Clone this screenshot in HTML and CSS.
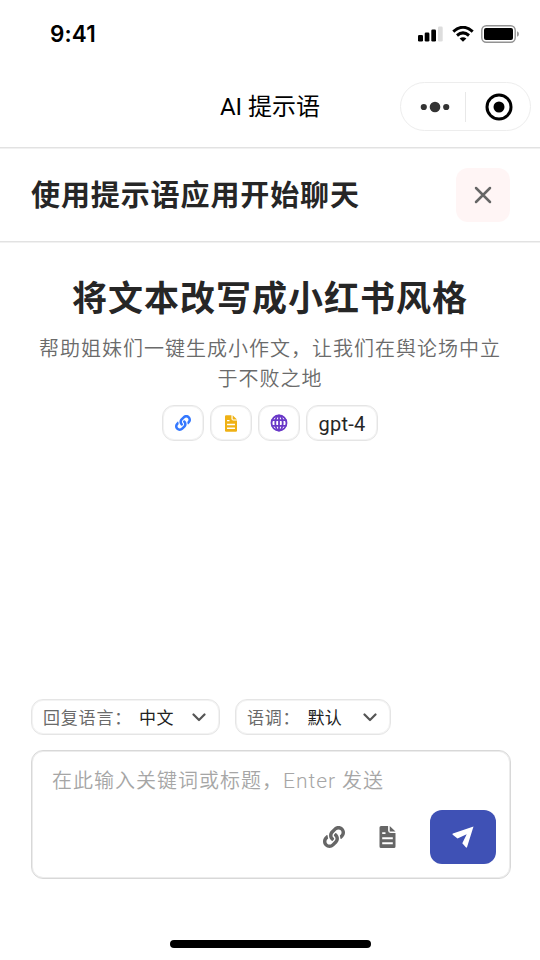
FILE: index.html
```html
<!DOCTYPE html>
<html lang="zh-CN">
<head>
<meta charset="utf-8">
<title>AI 提示语</title>
<link rel="stylesheet" href="styles.css">
</head>
<body>
<svg class="defs" aria-hidden="true">
  <symbol id="link" viewBox="0 0 512 512"><path d="M326.612 185.391c59.747 59.809 58.927 155.698.36 214.59-.11.12-.24.25-.36.37l-67.2 67.2c-59.27 59.27-155.699 59.262-214.96 0-59.27-59.26-59.27-155.7 0-214.96l37.106-37.106c9.84-9.84 26.786-3.3 27.294 10.606.648 17.722 3.826 35.527 9.69 52.721 1.986 5.822.567 12.262-3.783 16.612l-13.087 13.087c-28.026 28.026-28.905 73.66-1.155 101.96 28.024 28.579 74.086 28.749 102.325.51l67.2-67.19c28.191-28.191 28.073-73.757 0-101.83-3.701-3.694-7.429-6.564-10.341-8.569a16.037 16.037 0 0 1-6.947-12.606c-.396-10.567 3.348-21.456 11.698-29.806l21.054-21.055c5.521-5.521 14.182-6.199 20.584-1.731a152.482 152.482 0 0 1 20.522 17.197zM467.547 44.449c-59.261-59.262-155.69-59.27-214.96 0l-67.2 67.2c-.12.12-.25.25-.36.37-58.566 58.892-59.387 154.781.36 214.59a152.454 152.454 0 0 0 20.521 17.196c6.402 4.468 15.064 3.789 20.584-1.731l21.054-21.055c8.35-8.35 12.094-19.239 11.698-29.806a16.037 16.037 0 0 0-6.947-12.606c-2.912-2.005-6.64-4.875-10.341-8.569-28.073-28.073-28.191-73.639 0-101.83l67.2-67.19c28.239-28.239 74.3-28.069 102.325.51 27.75 28.3 26.872 73.934-1.155 101.96l-13.087 13.087c-4.35 4.35-5.769 10.79-3.783 16.612 5.864 17.194 9.042 34.999 9.69 52.721.509 13.906 17.454 20.446 27.294 10.606l37.106-37.106c59.271-59.259 59.271-155.699.001-214.959z"/></symbol>
  <symbol id="file" viewBox="0 0 16 22"><path fill-rule="evenodd" d="M1.5 0H8.6V4.600Q8.600 7 11 7H16V20.500Q16 22 14.500 22H1.500Q0 22 0 20.500V1.500Q0 0 1.500 0ZM2.700 6.300V8H6V6.300ZM2.700 11.300V13.200H13.300V11.300ZM2.700 16.300V18.200H13.300V16.300ZM10.200 0L16 5.500H10.200Z"/></symbol>
</svg>
<div class="screen">
  <div class="status">
    <span class="time">9:41</span>
    <svg class="signal" viewBox="0 0 26 16"><rect x="0" y="9" width="5" height="6.500" rx="1.300"/><rect x="6.700" y="6.500" width="4.700" height="9" rx="1.300"/><rect x="13.300" y="3.500" width="4.700" height="12" rx="1.300"/><rect class="faint" x="20" y=".5" width="4.700" height="15" rx="1.300"/></svg>
    <svg class="wifi" viewBox="0 0 22 16"><path class="arc" d="M1.300 5.600Q11-3 20.700 5.600M5 9.500Q11 4.300 17 9.500"/><path d="M7.600 12.400Q11 9.900 14.400 12.400L11 15.800Z"/></svg>
    <svg class="battery" viewBox="0 0 38 18"><rect class="shell" x=".8" y=".8" width="33.400" height="16.400" rx="4.500"/><rect x="3" y="3" width="29" height="12" rx="2"/><path class="tip" d="M36 6.300Q38 7 38 9T36 11.700Z"/></svg>
  </div>
  <header class="nav">
    <span class="nav-title">AI 提示语</span>
    <div class="capsule">
      <svg class="dots" viewBox="0 0 30 12"><circle cx="3.800" cy="6" r="3.100"/><circle cx="15" cy="6" r="5.300"/><circle cx="26.200" cy="6" r="3.100"/></svg>
      <i class="divider"></i>
      <svg class="target" viewBox="0 0 28 28"><circle class="ring" cx="14" cy="14" r="12"/><circle cx="14" cy="14" r="5.500"/></svg>
    </div>
  </header>
  <div class="bar">
    <h2>使用提示语应用开始聊天</h2>
    <button class="close" aria-label="关闭"><svg viewBox="0 0 18 18"><path d="M2 2L16 16M16 2L2 16"/></svg></button>
  </div>
  <main>
    <h1>将文本改写成小红书风格</h1>
    <p class="desc">帮助姐妹们一键生成小作文，让我们在舆论场中立于不败之地</p>
    <div class="tags">
      <span class="tag blue"><svg class="i-link"><use href="#link"/></svg></span>
      <span class="tag yellow"><svg class="i-file"><use href="#file"/></svg></span>
      <span class="tag purple"><svg class="i-globe" viewBox="0 0 18 18"><circle cx="9" cy="9" r="7.500"/><ellipse cx="9" cy="9" rx="3.700" ry="7.500"/><path d="M9 1V17M1.700 6.200H16.300M1.700 11.800H16.300"/></svg></span>
      <span class="tag model">gpt-4</span>
    </div>
  </main>
  <footer>
    <div class="selects">
      <div class="select lang"><span class="label">回复语言：</span><span class="value">中文</span><svg viewBox="0 0 14 9"><path d="M1.500 1.500L7 7L12.500 1.500"/></svg></div>
      <div class="select tone"><span class="label">语调：</span><span class="value">默认</span><svg viewBox="0 0 14 9"><path d="M1.500 1.500L7 7L12.500 1.500"/></svg></div>
    </div>
    <div class="composer">
      <div class="placeholder">在此输入关键词或标题，<span class="key">Enter</span> 发送</div>
      <div class="actions">
        <svg class="a-link"><use href="#link"/></svg>
        <svg class="a-file"><use href="#file"/></svg>
        <button class="send" aria-label="发送"><svg viewBox="0 0 22 22"><path d="M21.500 .5L15 21.200Q14.500 22 13.800 21.300L10.300 17.200L14.700 8.200L5.500 12.400L.7 8.700Q0 7.900 .9 7.500Z"/></svg></button>
      </div>
    </div>
  </footer>
  <div class="home"></div>
</div>
</body>
</html>
```

FILE: styles.css
```css
* { box-sizing: border-box; }
body { margin: 0; background: #fff; font-family: Roboto, "Noto Sans CJK SC", sans-serif; color: #262626; }
h1, h2, p { margin: 0; }
button { border: 0; padding: 0; }
svg { display: block; flex: none; fill: currentColor; }
.defs { display: none; }
.screen { width: 540px; height: 960px; display: flex; flex-direction: column; overflow: hidden; }

.status { height: 66px; display: flex; align-items: center; padding: 2px 21px 0 50px; color: #000; }
.time { font: 600 22.5px/26px Inter, sans-serif; letter-spacing: .1px; margin-right: auto; }
.signal { width: 26px; height: 16px; margin-right: 8px; }
.faint { fill: #ddd; }
.wifi { width: 22px; height: 16px; margin-right: 7px; }
.arc { fill: none; stroke: #000; stroke-width: 3; }
.battery { width: 38px; height: 18px; }
.shell { fill: none; stroke: #929292; stroke-width: 1.4; }
.tip { fill: #999; }

.nav { height: 82px; flex: none; display: grid; grid-template-columns: 1fr auto 1fr; align-items: center; padding: 0 9px; border-bottom: 1px solid #e2e2e2; box-shadow: 0 1px #f1f1f1; color: #000; }
.nav-title { grid-column: 2; font-size: 24px; line-height: 36px; white-space: nowrap; }
.capsule { justify-self: end; width: 131px; height: 49px; border: 1px solid #ededed; border-radius: 25px; display: flex; align-items: center; padding: 0 17px 0 19px; }
.dots { width: 30px; height: 12px; color: #333; }
.divider { width: 1px; height: 30px; background: #e8e8e8; margin: 0 19px 0 15px; }
.target { width: 28px; height: 28px; }
.ring { fill: none; stroke: #000; stroke-width: 3; }

.bar { height: 94px; flex: none; padding: 1px 30px 0 31px; display: flex; align-items: center; justify-content: space-between; border-bottom: 1px solid #e2e2e2; box-shadow: 0 1px #f1f1f1; }
.bar h2 { font-size: 29px; line-height: 44px; letter-spacing: .9px; font-weight: 700; padding-top: 2px; }
.close { width: 54px; height: 54px; border-radius: 12px; background: #fff5f5; display: grid; place-items: center; }
.close svg { width: 18px; height: 18px; }
.close path { stroke: #666; stroke-width: 2.5; stroke-linecap: round; }

main { flex: 1; padding: 32px 38px 0; text-align: center; }
h1 { font-size: 35px; line-height: 52px; letter-spacing: 1px; font-weight: 700; }
.desc { margin-top: 8px; font-size: 20px; line-height: 30px; letter-spacing: 1px; color: #6a6a6a; font-weight: 350; }
.tags { margin-top: 11px; display: flex; justify-content: center; gap: 6px; }
.tag { width: 42px; height: 36px; border: 1px solid #e5e5e5; box-shadow: inset 0 0 0 1px #f3f3f3; border-radius: 12px; display: flex; align-items: center; justify-content: center; }
.model { width: 72px; font-size: 20px; line-height: 24px; letter-spacing: .2px; padding-top: 1px; }
.blue { color: #3478ff; }
.yellow { color: #efb114; }
.purple { color: #6938c8; }
.i-link { width: 16px; height: 16px; }
.i-file { width: 12px; height: 17px; }
.i-globe { width: 18px; height: 18px; fill: none; stroke: currentColor; stroke-width: 1.8; }

footer { padding: 0 29px 0 31px; }
.selects { display: flex; gap: 15px; }
.select { height: 36px; border: 1px solid #e5e5e5; box-shadow: inset 0 0 0 1px #f3f3f3; border-radius: 12px; display: flex; align-items: center; padding: 1px 13px 0 11px; font-size: 17px; line-height: 26px; }
.lang { width: 189px; }
.tone { width: 156px; }
.label { color: #6a6a6a; letter-spacing: .8px; }
.value { color: #222; letter-spacing: .4px; margin-left: 7px; }
.select svg { width: 14px; height: 9px; margin-left: auto; fill: none; stroke: #555; stroke-width: 2.2; stroke-linecap: round; stroke-linejoin: round; }
.composer { margin-top: 15px; height: 129px; border: 1px solid #d8d8d8; box-shadow: inset 0 0 0 1px #ececec; border-radius: 12px; padding: 15px 14px 14px 20px; display: flex; flex-direction: column; justify-content: space-between; }
.placeholder { font-size: 20px; line-height: 30px; letter-spacing: 1px; color: #a6a6a6; white-space: nowrap; font-weight: 350; }
.key { font-size: 21px; font-weight: 300; }
.actions { display: flex; align-items: center; justify-content: flex-end; color: #666; }
.a-link { width: 22px; height: 22px; }
.a-file { width: 17px; height: 22px; margin: 0 34px 0 34px; }
.send { width: 66px; height: 54px; border-radius: 12px; background: #3f51b5; color: #fff; display: grid; place-items: center; }
.send svg { width: 22px; height: 22px; }
.home { width: 201px; height: 8px; border-radius: 4px; background: #000; margin: 61px auto 12px; flex: none; }
```
